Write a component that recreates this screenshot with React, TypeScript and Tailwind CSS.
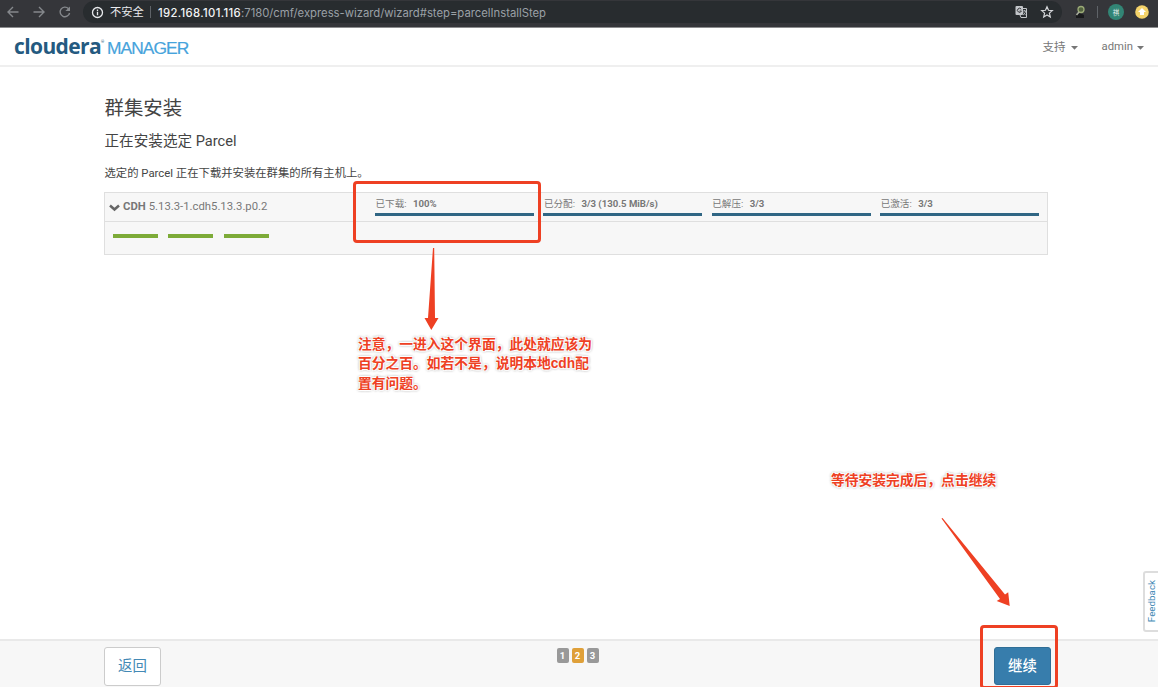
import React from "react";

const ui = "font-[Roboto,'Noto_Sans_CJK_SC',sans-serif]";

function BrowserBar() {
  return (
    <div className="flex h-7 shrink-0 items-start border-b border-[#8b8c8e] bg-[#35363a] font-[Inter,'Noto_Sans_CJK_SC',sans-serif] text-[11px] text-[#9aa0a6]">
      <div className="flex h-6 w-[83px] shrink-0 items-center">
        <svg width="83" height="24" fill="none" stroke="#85888c" strokeWidth="1.4">
          <path d="M18.5 12H8M13 7l-5 5 5 5M33.5 12H44M39 7l5 5-5 5" />
          <path d="M68.4 8.6A4.8 4.8 0 1 0 69.6 13" />
          <path d="M70 6.5v4.6h-4.6z" fill="#85888c" stroke="none" />
        </svg>
      </div>
      <div className="mt-px flex h-[22px] w-[979px] shrink-0 items-center rounded-full bg-[#282c2f]">
        <svg className="ml-2 shrink-0" width="13" height="13" viewBox="0 0 13 13" fill="none" stroke="#e8eaed" strokeWidth="1.3">
          <circle cx="6.5" cy="6.5" r="5" />
          <path d="M6.5 5.8v3.4M6.5 3.6v1.3" />
        </svg>
        <span className="ml-1.5 w-[35px] whitespace-nowrap text-[11.3px] text-[#e8eaed]">不安全</span>
        <span className="ml-[5px] h-3 w-px bg-[#5f6368]" />
        <span className="ml-[7px] flex whitespace-nowrap pt-0.5 text-[11.3px] tracking-[-0.01px]">
          <span className="w-[83px] font-medium tracking-[0.34px] text-[#f1f3f4]">192.168.101.116</span>
          <span>:7180/cmf/express-wizard/wizard#step=parcelInstallStep</span>
        </span>
        <svg className="ml-auto mr-[7px] shrink-0" width="40" height="16" viewBox="0 0 40 16" fill="none">
          <rect x="0.5" y="2" width="7.5" height="9" rx="1" fill="#c3c6ca" />
          <path d="M6.2 5.2A2 2 0 1 0 6.4 7H4.6" stroke="#35363a" strokeWidth="1" />
          <path d="M8 4.5h3.5v9H6L5 11" stroke="#c3c6ca" />
          <path d="M7.5 7h4M9.5 6v1M10.8 7c-.4 2-1.6 3-2.8 4M8.5 8.5l2.3 2.8" stroke="#c3c6ca" strokeWidth="0.8" />
          <path d="M32 2.8l1.5 3.5 3.8.3-2.9 2.5.9 3.8-3.3-2-3.3 2 .9-3.8-2.9-2.5 3.8-.3z" stroke="#d5d7da" strokeWidth="1.2" />
        </svg>
      </div>
      <svg className="shrink-0" width="96" height="26" viewBox="1062 0 96 26">
        <path d="M1076 18v-3l4-2 4 2v3z" fill="#191a1c" />
        <circle cx="1081" cy="9.5" r="3" fill="#52633f" stroke="#9baa77" strokeWidth="1.3" />
        <path d="M1079 12l-2.5 3" stroke="#a9ad9e" strokeWidth="1.5" />
        <path d="M1097.5 6v12" stroke="#5f6368" />
        <circle cx="1116" cy="12" r="8" fill="#328575" />
        <text x="1116" y="14.5" textAnchor="middle" fontSize="6.5" fill="#e4efeb">祺</text>
        <circle cx="1142" cy="12" r="6.8" fill="#f4d36a" />
        <path d="M1142 8l4 4h-2v3h-4v-3h-2z" fill="#fff" />
      </svg>
    </div>
  );
}

function Caret() {
  return (
    <svg width="7" height="4" viewBox="0 0 7 4">
      <path d="M0 0h7L3.5 3.8z" fill="#777" />
    </svg>
  );
}

function Header() {
  return (
    <header className="flex h-[39px] shrink-0 items-center border-b-2 border-[#efefef] pl-3.5 pr-3.5">
      <div className="flex items-baseline whitespace-nowrap leading-none">
        <span className="w-[87px] font-['Open_Sans',sans-serif] text-[21px] font-bold tracking-[-0.6px] text-[#245a80]">cloudera</span>
        <span className="w-[6px] self-start pt-1 text-[4px] text-[#245a80]">®</span>
        <span className="font-['Liberation_Sans',sans-serif] text-[17.4px] tracking-[-0.95px] text-[#46a3dc] [-webkit-text-stroke:0.2px_#46a3dc]">MANAGER</span>
      </div>
      <nav className="ml-auto flex items-center gap-6 pt-0.5 text-[11.5px] text-[#777]">
        <span className="flex items-center gap-[5px]">支持 <Caret /></span>
        <span className="flex items-center gap-1 text-[11.3px]">admin <Caret /></span>
      </nav>
    </header>
  );
}

const stages = [
  { label: "已下载:", value: "100%" },
  { label: "已分配:", value: "3/3 (130.5 MiB/s)" },
  { label: "已解压:", value: "3/3" },
  { label: "已激活:", value: "3/3" },
];

function ParcelTable() {
  return (
    <section className="mt-[11px] h-[63px] w-[944px] border border-[#dfdfdf] bg-[#f7f7f7] text-[#777]">
      <div className="flex h-[29px] border-b border-[#dfdfdf]">
        <div className="flex w-[270px] items-center pl-1 pt-px text-[11.3px]">
          <svg width="11" height="8" viewBox="0 0 11 8" fill="none" stroke="#666" strokeWidth="2.5">
            <path d="M1 1.5l4.5 4 4.5-4" />
          </svg>
          <b className="ml-[3px] mr-[3px] font-bold">CDH</b>5.13.3-1.cdh5.13.3.p0.2
        </div>
        <div className="flex gap-[9.4px]">
          {stages.map((s) => (
            <div key={s.label} className="w-[159px] pt-[5px]">
              <div className="flex h-3 items-center whitespace-nowrap pl-[0.5px] text-[9.6px]">
                <span className="w-[37.5px]">{s.label}</span>
                <b>{s.value}</b>
              </div>
              <div className="mt-[3px] h-[2.5px] bg-[#306684]" />
            </div>
          ))}
        </div>
      </div>
      <div className="flex gap-[10.4px] pl-2 pt-3">
        <div className="h-1 w-[45px] bg-[#7dab38]" />
        <div className="h-1 w-[45px] bg-[#7dab38]" />
        <div className="h-1 w-[45px] bg-[#7dab38]" />
      </div>
    </section>
  );
}

function Footer() {
  return (
    <footer className="flex h-12 shrink-0 items-start justify-between border-t-2 border-[#e9e9e9] bg-[#f7f7f7] pl-[104px] pr-[107px] pt-[6px] text-[14.4px]">
      <button className="h-[39px] w-[57px] rounded-[3px] border border-[#ccc] bg-white pt-px text-[#4389b5]">返回</button>
      <div className="mt-px flex gap-[3px] text-[9.5px] font-bold leading-[15px] text-white">
        <span className="w-[12px] rounded-[2px] bg-[#999] text-center">1</span>
        <span className="w-[12px] rounded-[2px] bg-[#dfa039] text-center">2</span>
        <span className="w-[12px] rounded-[2px] bg-[#999] text-center">3</span>
      </div>
      <button className="h-[38px] w-[57px] rounded-[3px] border border-[#306e96] bg-[#377dac] pt-px font-medium text-white">继续</button>
    </footer>
  );
}

const note =
  "absolute whitespace-nowrap font-['Liberation_Sans','Noto_Sans_CJK_SC',sans-serif] text-[13.77px] leading-[19.3px] font-bold text-[#ee4023] [text-shadow:0_0_1px_#fff,0_0_1px_#fff,1px_1px_1px_#fff,-1px_-1px_1px_#fff,1px_-1px_1px_#fff,-1px_1px_1px_#fff,0_0_3px_#777,0_0_3px_#999]";

function Annotations() {
  return (
    <div className="pointer-events-none absolute inset-0 overflow-hidden">
      <div className="absolute left-[353px] top-[181px] h-[62px] w-[188px] rounded-[4px] border-3 border-[#ee4023]" />
      <div className="absolute left-[980px] top-[625px] h-[63.5px] w-[78px] rounded-[4px] border-3 border-[#ee4023]" />
      <svg className="absolute inset-0" width="1158" height="687" fill="#ee4023">
        <path d="M433 248h1.2L435 318h3.5L431.3 330 424.5 318H428z" />
        <path d="M941.5 518.5l1-.5L1005 594.5l3.2-2.3 1.5 13.8-13-5 3.3-2z" />
      </svg>
      <div className={note + " left-[358px] top-[335px]"}>
        注意，一进入这个界面，此处就应该为<br />百分之百。如若不是，说明本地cdh配<br />置有问题。
      </div>
      <div className={note + " left-[831px] top-[471px]"}>等待安装完成后，点击继续</div>
    </div>
  );
}

export default function App() {
  return (
    <div className={"relative flex h-[687px] w-[1158px] flex-col overflow-hidden bg-white " + ui}>
      <BrowserBar />
      <Header />
      <main className="flex-1 pl-[104.5px] pt-[28px] text-[#444]">
        <h1 className="h-[27px] text-[19.4px] leading-[27px]">群集安装</h1>
        <h2 className="mt-[9px] h-[21px] text-[14.6px] leading-5">正在安装选定 Parcel</h2>
        <p className="mt-[13px] h-4 text-[11.35px] leading-4">选定的 Parcel 正在下载并安装在群集的所有主机上。</p>
        <div className="-ml-[0.5px]">
          <ParcelTable />
        </div>
      </main>
      <Footer />
      <div className="absolute -right-0.5 top-[571px] flex h-[61px] w-[17px] items-center justify-center rounded-l-[3px] border-2 border-[#ddd] bg-white pl-0.5 text-[9.8px] text-[#4389b5]">
        <span className="rotate-180 [writing-mode:vertical-rl]">Feedback</span>
      </div>
      <Annotations />
    </div>
  );
}
